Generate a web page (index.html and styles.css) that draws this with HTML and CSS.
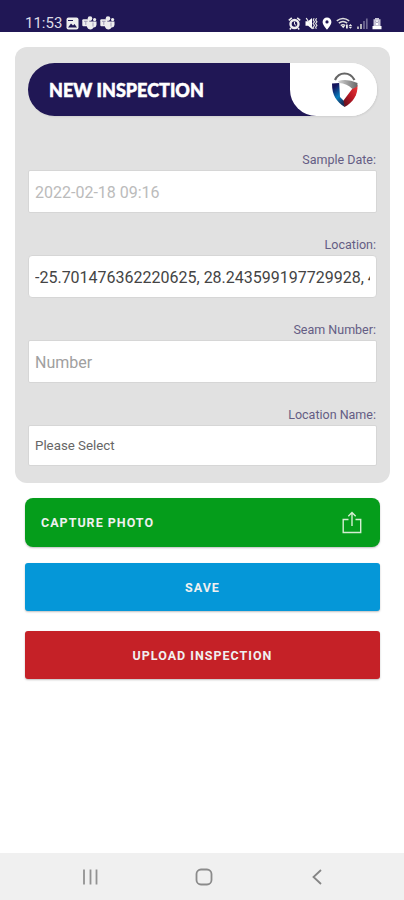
FILE: index.html
```
<!DOCTYPE html>
<html lang="en">
<head>
  <meta charset="UTF-8" />
  <meta name="viewport" content="width=device-width, initial-scale=1.0"/>
  <title>New Inspection</title>
  <link rel="stylesheet" href="styles.css">
</head>
<body>

  <header class="status-bar">
    <div class="status-left">
      <span class="clock">11:53</span>
      <svg class="status-icon" width="13" height="13" viewBox="0 0 13 13">
        <rect x="0.5" y="0.5" width="12" height="12" rx="2" fill="#eee"/>
        <path d="M2 10.5 5 6.5l2 2 1.5-1.5 2.5 3.5z" fill="#201755"/>
        <path d="M2 3.5h5" stroke="#201755"/>
      </svg>
      <svg class="status-icon" width="15" height="14" viewBox="0 0 15 14">
        <circle cx="8" cy="2.6" r="2.3" fill="#eee"/>
        <circle cx="12.6" cy="3.6" r="1.6" fill="#eee"/>
        <path d="M4 5.5h10.5V9a3 3 0 0 1-3 2.5A3.5 3.5 0 0 1 5 11z" fill="#eee"/>
        <rect x="0.3" y="3.3" width="7" height="7" rx="1" fill="#eee"/>
        <path d="M2 5.3h3.6M3.8 5.3v3.6M11 6.5v4" stroke="#8f8aab" stroke-width="0.8"/>
      </svg>
      <svg class="status-icon" width="15" height="14" viewBox="0 0 15 14">
        <circle cx="8" cy="2.6" r="2.3" fill="#eee"/>
        <circle cx="12.6" cy="3.6" r="1.6" fill="#eee"/>
        <path d="M4 5.5h10.5V9a3 3 0 0 1-3 2.5A3.5 3.5 0 0 1 5 11z" fill="#eee"/>
        <rect x="0.3" y="3.3" width="7" height="7" rx="1" fill="#eee"/>
        <path d="M2 5.3h3.6M3.8 5.3v3.6M11 6.5v4" stroke="#8f8aab" stroke-width="0.8"/>
      </svg>
    </div>
    <div class="status-right">
      <!-- alarm -->
      <svg width="13" height="13" viewBox="0 0 13 13">
        <circle cx="6.5" cy="7" r="4" fill="none" stroke="#eee" stroke-width="2.4"/>
        <path d="M0.8 3.4 3.8.9M12.2 3.4 9.2.9M3 11l-1.2 1.4M10 11l1.2 1.4" stroke="#eee" stroke-width="1.6"/>
        <path d="M6.5 4.8v2.5l1.6 1" stroke="#eee" fill="none"/>
      </svg>
      <!-- muted, vibrate -->
      <svg width="13" height="13" viewBox="0 0 13 13">
        <path d="M.5 4.3h2.6L7 1v11L3.1 8.7H.5z" fill="#fff"/>
        <path d="M1.200 1 8 12" stroke="#eee" stroke-width="1.2"/>
        <path d="M9.2 1.2l-1 1.8 1.3 1.8-1.3 1.8 1.3 1.8-1.3 1.8.8 1.6M11.6 1.2l-1 1.8 1.3 1.8-1.3 1.8 1.3 1.8-1.3 1.8.8 1.6" stroke="#ddd" stroke-width="1.2" fill="none"/>
      </svg>
      <!-- location -->
      <svg class="pin" width="10" height="13" viewBox="0 0 10 13">
        <path fill-rule="evenodd" d="M5 .5a4.4 4.4 0 0 0-4.4 4.4C.6 8 5 12.6 5 12.6S9.4 8 9.4 4.9A4.4 4.4 0 0 0 5 .5zM5 3.300a1.600 1.600 0 1 1 0 3.200 1.600 1.600 0 0 1 0-3.200z" fill="#fff"/>
      </svg>
      <!-- wifi -->
      <svg width="17" height="13" viewBox="0 0 17 13">
        <path d="M.8 3.800Q7 -1 13.200 3.800M2.800 6.200Q7 2.800 11.200 6.200M4.800 8.600Q7 6.800 9.200 8.600" stroke="#ddd" stroke-width="1.500" fill="none"/>
        <path d="M5.500 9h3.500L7.200 11.300zM10 7.500h1.800v4H10zM12.600 9l1.800-2L16.200 9zM12.600 9.800h3.600l-1.800 2z" fill="#eee"/>
      </svg>
      <!-- signal -->
      <svg class="signal" width="11" height="13" viewBox="0 0 11 13">
        <path d="M1 9.500V12M4 7v5" stroke="#ccc" stroke-width="1.700"/>
        <path d="M7 4v8M9.800 1.500V12" stroke="#716b96" stroke-width="1.700"/>
      </svg>
      <!-- battery -->
      <svg width="10" height="13" viewBox="0 0 10 13">
        <path d="M3 1h4v1.300h1.500v7H1.500v-7H3z" fill="#c9c6d8"/>
        <path d="M.5 9h9v3.300h-9zM4 3.500h2V8H4z" fill="#fff"/>
        <path d="M3.500 4.200 5 6l1.500-1.800" stroke="#a5a0bd" fill="none"/>
      </svg>
    </div>
  </header>

  <main class="page">
    <section class="card">
      <div class="title-bar">
        <h1>NEW INSPECTION</h1>
        <div class="logo">
          <svg width="28" height="37" viewBox="0 0 28 37">
            <defs>
              <linearGradient id="blue" x1="0" y1="0" x2="0.5" y2="1">
                <stop offset="0.2" stop-color="#14135c"/>
                <stop offset="0.65" stop-color="#087dbd"/>
                <stop offset="1" stop-color="#16305b"/>
              </linearGradient>
              <linearGradient id="red" x1="1" y1="0" x2="0" y2="1">
                <stop offset="0" stop-color="#ef3b3b"/>
                <stop offset="0.5" stop-color="#ba1723"/>
                <stop offset="1" stop-color="#54101d"/>
              </linearGradient>
              <linearGradient id="grey">
                <stop offset="0" stop-color="#d5d5d5"/>
                <stop offset="1" stop-color="#666"/>
              </linearGradient>
            </defs>
            <path d="M4 9Q7 2.500 13.500 2.500T23.500 9" fill="none" stroke="#666" stroke-width="2.200"/>
            <path d="M1 12.500 8.200 12l.8 14L14 31l-.3 5C5.500 30.500 1 24.500 1 12.500z" fill="url(#blue)"/>
            <path d="M26.500 14 21.500 17.500 12.500 29.500l1 6.500C22 31.500 27 24 26.500 14z" fill="url(#red)"/>
            <path d="M7 10Q16 7 26.500 12L26.300 15.500 21.500 18Q16 12.500 8 12z" fill="url(#grey)"/>
          </svg>
        </div>
      </div>

      <form class="inspection-form">
        <div class="field">
          <label for="sampleDate">Sample Date:</label>
          <input type="text" id="sampleDate" class="muted" value="2022-02-18 09:16" readonly />
        </div>
        <div class="field">
          <label for="location">Location:</label>
          <input type="text" id="location" class="location-input" value="-25.701476362220625, 28.243599197729928, 47.5" />
        </div>
        <div class="field">
          <label for="seamNumber">Seam Number:</label>
          <input type="text" id="seamNumber" placeholder="Number" />
        </div>
        <div class="field">
          <label for="locationName">Location Name:</label>
          <select id="locationName">
            <option>Please Select</option>
          </select>
        </div>
      </form>
    </section>

    <div class="actions">
      <button class="btn capture-btn">
        CAPTURE PHOTO
        <svg width="20" height="23" viewBox="0 0 20 23" fill="none" stroke="#d5eed2" stroke-width="1.400">
          <path d="M6.500 8.500H1.200v13h17.500v-13h-5.200M10 15V1.500M6.300 5.200 10 1.500l3.700 3.700"/>
        </svg>
      </button>
      <button class="btn save-btn">SAVE</button>
      <button class="btn upload-btn">UPLOAD INSPECTION</button>
    </div>
  </main>

  <nav class="nav-bar">
    <svg width="16" height="16" viewBox="0 0 16 16" stroke="#929292" stroke-width="1.800">
      <path d="M2 .5v15M8.500.5v15M14.500.5v15"/>
    </svg>
    <svg width="18" height="18" viewBox="0 0 18 18">
      <rect x="1.500" y="1.500" width="15" height="15" rx="4.500" fill="none" stroke="#8b8b8b" stroke-width="1.800"/>
    </svg>
    <svg width="16" height="16" viewBox="0 0 16 16">
      <path d="M12 1 4.500 8l7.500 7" fill="none" stroke="#858585" stroke-width="1.800"/>
    </svg>
  </nav>

</body>
</html>
```
FILE: styles.css
```
* {
  box-sizing: border-box;
}
body {
  margin: 0;
  height: 900px;
  display: flex;
  flex-direction: column;
  font-family: Roboto, sans-serif;
  background: #fff;
  overflow: hidden;
}
svg {
  display: block;
  flex-shrink: 0;
}

/* Phone status bar */
.status-bar {
  height: 32px;
  padding: 14px 22px 0 25px;
  display: flex;
  justify-content: space-between;
  background: #201755;
  color: #dddbe6;
}
.status-left,
.status-right {
  display: flex;
  align-items: center;
  height: 18px;
}
.status-left {
  gap: 3px;
}
.status-right {
  gap: 4px;
}
.clock {
  width: 38px;
  padding-top: 1px;
  font-size: 15px;
  line-height: 17px;
}

/* Form card */
.page {
  flex: 1;
  padding: 15px 14px 0 15px;
}
.card {
  height: 436px;
  padding: 16px 13px 0;
  border-radius: 12px;
  background: #e1e1e1;
}
.title-bar {
  display: flex;
  justify-content: space-between;
  align-items: center;
  height: 53px;
  padding-left: 21px;
  border-radius: 27px;
  background: linear-gradient(to right, #201755 310px, #fff 310px);
  box-shadow: 1px 1px 2px rgba(0,0,0,0.08);
}
.title-bar h1 {
  margin: 0;
  font-family: Lato, sans-serif;
  font-size: 18px;
  font-weight: 900;
  line-height: 24px;
  color: #fff;
  -webkit-text-stroke: 0.5px #fff;
}
.logo {
  width: 87px;
  height: 53px;
  padding: 8px 0 0 41px;
  border-radius: 0 27px 27px 27px;
  background: #fff;
}
.inspection-form {
  padding-top: 34px;
}
.field {
  height: 85px;
  display: flex;
  flex-direction: column;
}
.field label {
  height: 20px;
  padding-right: 1px;
  text-align: right;
  font-size: 12.5px;
  line-height: 19px;
  color: #645d84;
}
.field input,
.field select {
  width: 100%;
  height: 43px;
  margin: 0;
  padding: 1px 6px 0;
  border: 1px solid #d6d6d6;
  border-radius: 2px;
  background: #fff;
  font-family: inherit;
  font-size: 16px;
  color: #444;
  outline: none;
}
.field input.muted {
  color: #bbb;
}
.field input::placeholder {
  color: #a0a0a0;
}
.field .location-input {
  border-radius: 4px;
}
.field select {
  height: 41px;
  padding-top: 0;
  appearance: none;
  font-size: 13.3px;
  color: #666;
}

/* Buttons */
.actions {
  display: flex;
  flex-direction: column;
  padding: 15px 10px 0;
}
.btn {
  height: 48px;
  padding: 0 16px;
  border: none;
  border-radius: 3px;
  font-family: inherit;
  font-size: 12.5px;
  font-weight: 700;
  letter-spacing: 1px;
  color: #f0f0f0;
  box-shadow: 0 1px 2px rgba(0,0,0,0.25);
  cursor: pointer;
}
.capture-btn {
  display: flex;
  justify-content: space-between;
  align-items: center;
  height: 49px;
  padding-right: 18px;
  border-radius: 8px;
  background: #059d1b;
}
.save-btn {
  margin-top: 16px;
  background: #0597d8;
}
.upload-btn {
  margin-top: 20px;
  background: #c52127;
}

/* Phone navigation bar */
.nav-bar {
  height: 47px;
  display: flex;
  justify-content: space-between;
  align-items: center;
  padding: 0 79px 0 82px;
  background: #f0f0f0;
}
```
